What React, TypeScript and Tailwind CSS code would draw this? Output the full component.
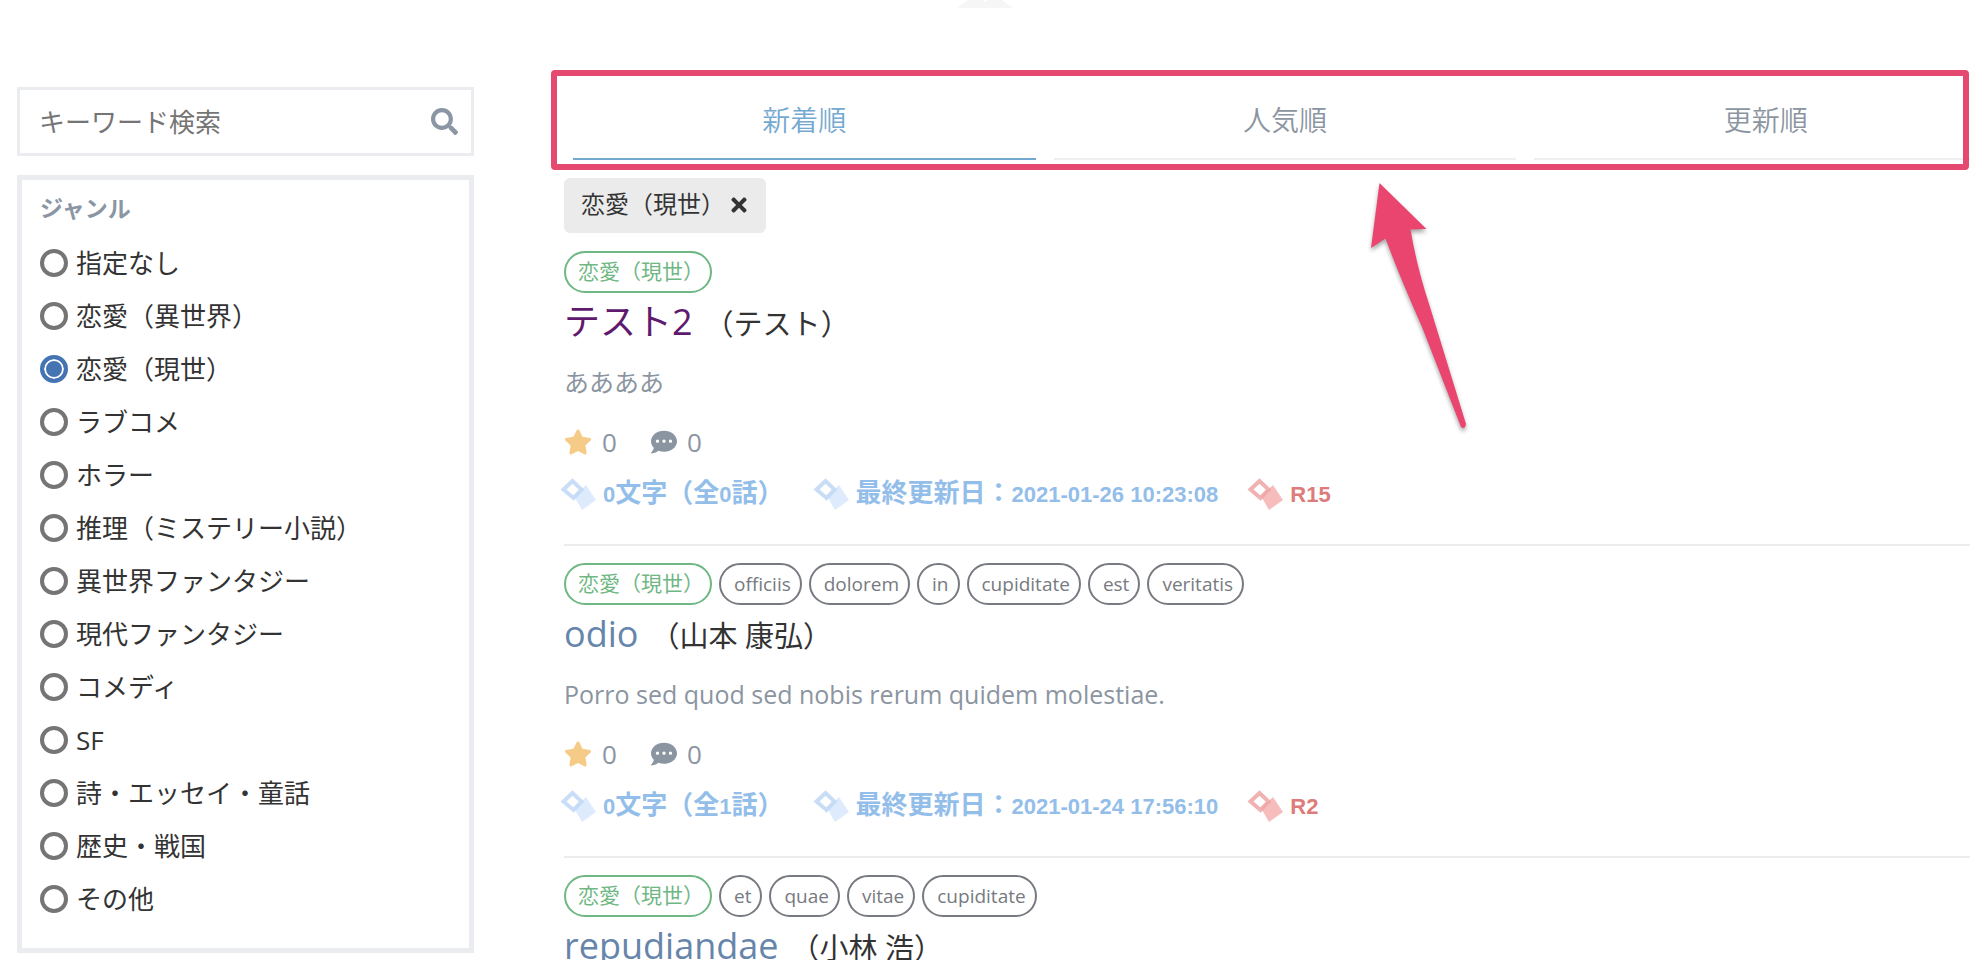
import React, { useState } from 'react';
import { FaCommentDots, FaSearch, FaStar, FaTimes } from 'react-icons/fa';

const genres = [
    '指定なし', '恋愛（異世界）', '恋愛（現世）', 'ラブコメ', 'ホラー', '推理（ミステリー小説）', '異世界ファンタジー',
    '現代ファンタジー', 'コメディ', 'SF', '詩・エッセイ・童話', '歴史・戦国', 'その他',
]

const sortTypes = ['新着順', '人気順', '更新順']

interface Novel {
    title: string;
    author: string;
    genre: string;
    tags: string[];
    visited?: boolean;
    detail?: { story: string; letters: string; updatedAt: string; rating: string };
}

const novels: Novel[] = [
    {
        title: 'テスト2', author: 'テスト', genre: '恋愛（現世）', tags: [], visited: true,
        detail: { story: 'ああああ', letters: '0文字（全0話）', updatedAt: '2021-01-26 10:23:08', rating: 'R15' },
    },
    {
        title: 'odio', author: '山本 康弘', genre: '恋愛（現世）',
        tags: ['officiis', 'dolorem', 'in', 'cupiditate', 'est', 'veritatis'],
        detail: { story: 'Porro sed quod sed nobis rerum quidem molestiae.', letters: '0文字（全1話）', updatedAt: '2021-01-24 17:56:10', rating: 'R2' },
    },
    { title: 'repudiandae', author: '小林 浩', genre: '恋愛（現世）', tags: ['et', 'quae', 'vitae', 'cupiditate'] },
]

const DiamondIcon: React.FC<{ line: string; fill: string }> = ({ line, fill }) => (
    <svg width="36" height="34" viewBox="0 0 36 34" className="flex-none" aria-hidden="true">
        <path d="M26 8 L36 23 L22 33 L14 19 Z" fill={fill} />
        <path d="M12.5 4 L21.5 12.5 L13.5 21 L3.5 12.5 Z" fill="none" stroke={line} strokeWidth="4" strokeOpacity="0.85" />
    </svg>
)

const Info: React.FC<{ text: string; red?: boolean }> = ({ text, red }) => (
    <span className={red ? 'flex items-center gap-[7px] text-[#dd7c7a]' : 'flex items-center gap-[7px] text-[#93bee9]'}>
        <DiamondIcon line={red ? '#eda4a4' : '#c0d8f4'} fill={red ? '#f7bcbc' : '#deebfd'} />
        {/* digits and latin letters are set smaller than the kanji */}
        <span>
            {text.split(/([\x20-\x7e]+)/).map((part, i) => i % 2 ? <span key={i} className="text-[22px]">{part}</span> : part)}
        </span>
    </span>
)

const NovelItem: React.FC<{ novel: Novel }> = ({ novel }) => (
    <article className="border-b-2 border-[#ececec] pb-[30px] mb-[17px]">
        <ul className="flex gap-[7px] text-[19px] leading-[38px]">
            <li className="h-[42px] rounded-[21px] border-2 border-[#6fb783] pl-3 pr-[6px] text-[21px] leading-9 text-[#6fb783]">{novel.genre}</li>
            {novel.tags.map((tag) => (
                <li key={tag} className="h-[42px] rounded-[21px] border-2 border-[#777a80] pl-[13px] pr-[9px] text-[#777a80]">{tag}</li>
            ))}
        </ul>
        <h2 className="flex h-[58px] items-baseline gap-3 leading-[58px]">
            <a href="#" className={novel.visited ? 'text-[36px] text-[#5f1a6e]' : 'text-[36px] text-[#6685ab]'}>{novel.title}</a>
            <span className="text-[29px] text-[#333]">（{novel.author}）</span>
        </h2>
        {novel.detail && (
            <>
                <p className="mt-3 text-[25px] leading-[38px] text-[#8b95a1]">{novel.detail.story}</p>
                <div className="mt-[22px] flex items-center text-[26px] leading-[38px] text-[#8b95a1]">
                    <FaStar className="size-7 text-[#f6ca87]" />
                    <span className="ml-[10px] mr-[34px]">0</span>
                    <FaCommentDots className="size-[26px]" />
                    <span className="ml-[10px]">0</span>
                </div>
                <div className="-ml-1 mt-[13px] flex gap-[29px] font-['Liberation_Sans','Noto_Sans_CJK_JP',sans-serif] text-[26px] leading-[38px] font-bold">
                    <Info text={novel.detail.letters} />
                    <Info text={`最終更新日：${novel.detail.updatedAt}`} />
                    <Info text={novel.detail.rating} red />
                </div>
            </>
        )}
    </article>
)

const App: React.FC = () => {
    const [genre, setGenre] = useState('恋愛（現世）')
    const [sort, setSort] = useState('新着順')

    return (
        <div className="h-screen overflow-hidden bg-white font-['Open_Sans','Noto_Sans_CJK_JP',sans-serif] text-[#333]" lang="ja">
            <header className="flex h-2 justify-center">
                <svg width="56" height="8" viewBox="0 0 56 8" aria-hidden="true"><path d="M0 8 L11 0 H25 L28 2 L31 0 H45 L56 8 Z" fill="#f6f6f6" /></svg>
            </header>
            <div className="flex">
                <aside className="ml-[17px] mt-[79px] w-[457px] flex-none">
                    <form className="flex h-[69px] items-center border-3 border-[#ebecef] pl-[19px] pr-[13px]" onSubmit={(e) => e.preventDefault()}>
                        <input type="search" aria-label="キーワード検索" placeholder="キーワード検索" className="min-w-0 flex-1 text-[26px] leading-[38px] outline-none placeholder:text-[#757575]" />
                        <button type="submit" aria-label="検索"><FaSearch className="size-[27px] text-[#8a96a3]" /></button>
                    </form>
                    <fieldset className="mt-[19px] border-5 border-[#ebecef] pb-[23px] pl-[18px] pt-[9px]">
                        <legend className="float-left w-full text-[23px] leading-[38px] font-bold text-[#8a96a3]">ジャンル</legend>
                        <div className="clear-both pt-[9px]">
                            {genres.map((name) => (
                                <label key={name} className="flex h-[53px] items-center gap-2 text-[26px] leading-[38px]">
                                    <input
                                        type="radio"
                                        name="genre"
                                        checked={genre === name}
                                        onChange={() => setGenre(name)}
                                        className="size-7 flex-none appearance-none rounded-full border-4 border-[#757575] checked:border-[#4474b2] checked:bg-[#4474b2] checked:inset-ring-2 checked:inset-ring-white"
                                    />
                                    {name}
                                </label>
                            ))}
                        </div>
                    </fieldset>
                </aside>
                {/* the result column runs past the right edge of the window */}
                <main className="-mr-9 ml-[90px] min-w-0 flex-1 pt-[62px]">
                    <div className="relative">
                        <div className="grid h-[108px] grid-cols-3 pt-[10px]">
                            {sortTypes.map((name) => (
                                <div key={name} className="px-[9px]">
                                    <button
                                        type="button"
                                        onClick={() => setSort(name)}
                                        className={sort === name
                                            ? 'h-20 w-full border-b-2 border-[#74a9d0] pt-px text-[28px] font-[350] text-[#74a9d0]'
                                            : 'h-20 w-full border-b-2 border-[#efefef] pt-px text-[28px] font-[350] text-[#8b95a1]'}
                                    >
                                        {name}
                                    </button>
                                </div>
                            ))}
                        </div>
                        <div className="pointer-events-none absolute -left-[13px] right-[37px] top-0 h-[100px] rounded-sm border-6 border-[#e5496f]" />
                        <svg className="pointer-events-none absolute left-[796px] top-[106px]" width="120" height="270" viewBox="1360 176 120 270" aria-hidden="true">
                            <path
                                d="M1379.5 183 L1426.5 229 L1410.5 229.5 Q1417 268 1430 307 L1466 424 Q1465 430 1461 427 L1422 327 Q1399 275 1385.5 238.5 L1371 248 Z"
                                fill="#ea456f"
                                className="drop-shadow-[0_3px_2px_rgba(0,0,0,0.35)]"
                            />
                        </svg>
                    </div>
                    <div className="mb-[18px] inline-flex h-[55px] items-start gap-[3px] rounded-md bg-[#ebebeb] pl-[17px] pr-4 text-2xl leading-[52px]">
                        恋愛（現世）
                        <button type="button" aria-label="解除" className="flex h-[54px] items-center"><FaTimes className="size-[22px]" /></button>
                    </div>
                    {novels.map((novel) => <NovelItem key={novel.title} novel={novel} />)}
                </main>
            </div>
        </div>
    );
};

export default App;
